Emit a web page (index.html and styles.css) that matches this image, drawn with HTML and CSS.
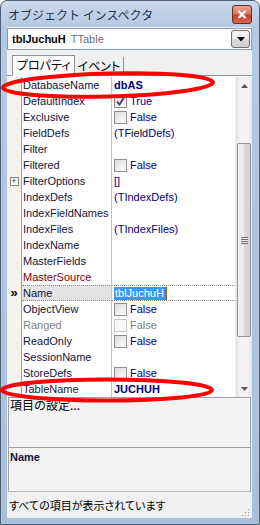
FILE: index.html
```html
<!DOCTYPE html>
<html lang="ja">
<head>
    <meta charset="UTF-8">
    <title>オブジェクト インスペクタ</title>
    <link rel="stylesheet" href="styles.css">
</head>
<body>
    <div class="window">
        <div class="titlebar">
            <span class="title">オブジェクト インスペクタ</span>
            <div class="close-btn">
                <svg width="10" height="9" viewBox="0 0 10 9"><path d="M1.5 1 L8.5 8 M8.5 1 L1.5 8" stroke="#fff" stroke-width="2.2"/></svg>
            </div>
        </div>

        <div class="client">
            <div class="combo">
                <span class="obj-name">tblJuchuH</span>
                <span class="obj-type">TTable</span>
                <div class="combo-btn">
                    <svg width="8" height="5" viewBox="0 0 8 5"><path d="M0 0 H8 L4 4.5 Z" fill="#000"/></svg>
                </div>
            </div>

            <div class="tabs">
                <div class="tab active">プロパティ</div>
                <div class="tab">イベント</div>
            </div>

            <div class="grid">
                <div class="rows">
                    <div class="row"><div class="gutter"></div><div class="prop">DatabaseName</div><div class="val bold">dbAS</div></div>
                    <div class="row"><div class="gutter"></div><div class="prop">DefaultIndex</div><div class="val"><span class="chk checked"><svg width="11" height="11" viewBox="0 0 11 11"><path d="M2 5.5 L4.5 8.5 L9 1.5" fill="none" stroke="#2d3f86" stroke-width="1.8"/></svg></span>True</div></div>
                    <div class="row"><div class="gutter"></div><div class="prop">Exclusive</div><div class="val"><span class="chk"></span>False</div></div>
                    <div class="row"><div class="gutter"></div><div class="prop">FieldDefs</div><div class="val">(TFieldDefs)</div></div>
                    <div class="row"><div class="gutter"></div><div class="prop">Filter</div><div class="val"></div></div>
                    <div class="row"><div class="gutter"></div><div class="prop">Filtered</div><div class="val"><span class="chk"></span>False</div></div>
                    <div class="row"><div class="gutter"><span class="plus">+</span></div><div class="prop">FilterOptions</div><div class="val">[]</div></div>
                    <div class="row"><div class="gutter"></div><div class="prop">IndexDefs</div><div class="val">(TIndexDefs)</div></div>
                    <div class="row"><div class="gutter"></div><div class="prop">IndexFieldNames</div><div class="val"></div></div>
                    <div class="row"><div class="gutter"></div><div class="prop">IndexFiles</div><div class="val">(TIndexFiles)</div></div>
                    <div class="row"><div class="gutter"></div><div class="prop">IndexName</div><div class="val"></div></div>
                    <div class="row"><div class="gutter"></div><div class="prop">MasterFields</div><div class="val"></div></div>
                    <div class="row"><div class="gutter"></div><div class="prop link">MasterSource</div><div class="val"></div></div>
                    <div class="row selected"><div class="gutter"><span class="marker">»</span></div><div class="prop">Name</div><div class="val"><span class="edit">tblJuchuH</span></div></div>
                    <div class="row"><div class="gutter"></div><div class="prop">ObjectView</div><div class="val"><span class="chk"></span>False</div></div>
                    <div class="row"><div class="gutter"></div><div class="prop readonly">Ranged</div><div class="val readonly"><span class="chk disabled"></span>False</div></div>
                    <div class="row"><div class="gutter"></div><div class="prop">ReadOnly</div><div class="val"><span class="chk"></span>False</div></div>
                    <div class="row"><div class="gutter"></div><div class="prop">SessionName</div><div class="val"></div></div>
                    <div class="row"><div class="gutter"></div><div class="prop">StoreDefs</div><div class="val"><span class="chk"></span>False</div></div>
                    <div class="row"><div class="gutter"></div><div class="prop">TableName</div><div class="val bold">JUCHUH</div></div>
                </div>

                <div class="vscroll">
                    <div class="sb-arrow sb-up">
                        <svg width="7" height="4" viewBox="0 0 7 4"><path d="M0 4 L3.5 0 L7 4 Z" fill="#555"/></svg>
                    </div>
                    <div class="sb-track sb-track-top"></div>
                    <div class="sb-thumb"><span class="grip"></span></div>
                    <div class="sb-track sb-track-bottom"></div>
                    <div class="sb-arrow sb-down">
                        <svg width="7" height="4" viewBox="0 0 7 4"><path d="M0 0 L7 0 L3.5 4 Z" fill="#555"/></svg>
                    </div>
                </div>
            </div>

            <div class="desc">
                <div class="desc-hint">項目の設定...</div>
                <div class="desc-name">Name</div>
            </div>

            <div class="status">
                <span>すべての項目が表示されています</span>
                <svg class="size-grip" width="10" height="10" viewBox="0 0 10 10">
                    <rect x="8" y="2" width="1" height="1" fill="#999"/>
                    <rect x="5" y="5" width="1" height="1" fill="#999"/>
                    <rect x="8" y="5" width="1" height="1" fill="#999"/>
                    <rect x="2" y="8" width="1" height="1" fill="#999"/>
                    <rect x="5" y="8" width="1" height="1" fill="#999"/>
                    <rect x="8" y="8" width="1" height="1" fill="#999"/>
                </svg>
            </div>
        </div>

        <!-- 赤丸の注釈 -->
        <svg class="marks" width="260" height="525" viewBox="0 0 260 525">
            <ellipse cx="108" cy="85" rx="105" ry="11.5" transform="rotate(-1.5 108 85)" fill="none" stroke="#ff0000" stroke-width="4"/>
            <ellipse cx="107" cy="390" rx="105" ry="10.5" fill="none" stroke="#ff0000" stroke-width="4"/>
        </svg>
    </div>
</body>
</html>
```

FILE: styles.css
```css
* {
    box-sizing: border-box;
}

body {
    margin: 0;
    font-family: "Liberation Sans", Tahoma, sans-serif;
    font-size: 11px;
    background: #fff;
}

.window {
    position: relative;
    width: 260px;
    height: 525px;
    border: 1px solid #4e6079;
    border-radius: 7px 7px 0 0;
    background: linear-gradient(to bottom, #cad9ec 0, #b4c9e2 26px, #a9c0dc 100%);
    padding: 0 7px 6px 6px;
    display: flex;
    flex-direction: column;
}

.titlebar {
    height: 26px;
    display: flex;
    align-items: center;
    justify-content: space-between;
    padding-left: 1px;
}

.title {
    font-family: "Noto Sans CJK JP", sans-serif;
    font-size: 12px;
    color: #1d3050;
}

.close-btn {
    width: 20px;
    height: 19px;
    border: 1px solid #6e2a20;
    border-radius: 3px;
    background: linear-gradient(to bottom, #e9a795 0, #d9745d 45%, #c5442b 55%, #d7674b 100%);
    display: flex;
    align-items: center;
    justify-content: center;
}

.client {
    flex: 1;
    display: flex;
    flex-direction: column;
    background: #f0f0f0;
}

/* コンボボックス */
.combo {
    margin-top: 1px;
    height: 22px;
    border: 1px solid #8a9ab0;
    background: #fff;
    display: flex;
    align-items: center;
    padding-left: 4px;
}

.obj-name {
    font-weight: bold;
    color: #000;
}

.obj-type {
    color: #707070;
    margin-left: 5px;
}

.combo-btn {
    margin-left: auto;
    margin-right: 1px;
    width: 19px;
    height: 18px;
    border: 1px solid #707070;
    border-radius: 3px;
    background: linear-gradient(to bottom, #f3f3f3 0, #ebebeb 50%, #dcdcdc 50%, #cfcfcf 100%);
    display: flex;
    align-items: center;
    justify-content: center;
}

/* タブ */
.tabs {
    height: 26px;
    display: flex;
    align-items: flex-end;
    padding-left: 5px;
    border-bottom: 1px solid #8c8f96;
}

.tab {
    font-family: "Noto Sans CJK JP", sans-serif;
    font-feature-settings: "palt";
    font-size: 12px;
    height: 19px;
    line-height: 18px;
    padding: 0 3px;
    color: #000;
    white-space: nowrap;
    border-right: 1px solid #8c8f96;
    margin-bottom: -1px;
    border-bottom: 1px solid #8c8f96;
}

.tab.active {
    height: 21px;
    padding: 0 3px 0 4px;
    background: #fcfcfc;
    border: 1px solid #8c8f96;
    border-bottom-color: #fcfcfc;
}

/* プロパティ一覧 */
.grid {
    height: 321px;
    display: flex;
    padding-top: 1px;
    background: #fff;
}

.rows {
    flex: 1;
    display: flex;
    flex-direction: column;
}

.row {
    height: 16px;
    display: flex;
}

.gutter {
    width: 15px;
    border-right: 1px solid #a0a0a0;
    background: #f6f4ea;
    display: flex;
    align-items: center;
    justify-content: center;
}

.prop {
    width: 90px;
    padding-left: 1px;
    line-height: 16px;
    color: #14143c;
    border-right: 1px solid #c4c4c4;
    white-space: nowrap;
    overflow: hidden;
}

.prop.link {
    color: #800000;
}

.prop.readonly,
.val.readonly {
    color: #808080;
}

.val {
    flex: 1;
    padding-left: 2px;
    color: #000080;
    display: flex;
    align-items: center;
    white-space: nowrap;
}

.val.bold {
    font-weight: bold;
}

.chk {
    width: 13px;
    height: 13px;
    margin-right: 3px;
    border: 1px solid #8f8f8f;
    background: linear-gradient(135deg, #dcdcdc 0, #f4f4f4 70%, #fff 100%);
    display: inline-flex;
    align-items: center;
    justify-content: center;
}

.chk.disabled {
    border-color: #c8c8c8;
    background: #f7f7f7;
}

.plus {
    width: 9px;
    height: 9px;
    border: 1px solid #8a8a8a;
    background: #fff;
    font-size: 9px;
    line-height: 7px;
    text-align: center;
    color: #333;
}

.marker {
    font-size: 13px;
    font-weight: bold;
    color: #000;
    line-height: 14px;
}

.row.selected .prop,
.row.selected .val {
    border-top: 1px dotted #8c8c8c;
    border-bottom: 1px dotted #8c8c8c;
    line-height: 14px;
}

.row.selected .prop {
    background: #e4e4e4;
}

.edit {
    background: #3399ff;
    color: #fff;
    height: 13px;
    line-height: 13px;
    padding: 0 1px;
    border-right: 2px solid #b0601a;
}

/* スクロールバー */
.vscroll {
    width: 17px;
    display: flex;
    flex-direction: column;
    background: linear-gradient(to right, #e2e2e2 0, #f2f2f2 25%, #f4f4f4 75%, #e4e4e4 100%);
    border-left: 1px solid #ececec;
}

.sb-arrow {
    display: flex;
    align-items: center;
    justify-content: center;
}

.sb-up {
    height: 17px;
}

.sb-down {
    height: 16px;
}

.sb-track-top {
    height: 49px;
}

.sb-track-bottom {
    height: 44px;
}

.sb-thumb {
    height: 194px;
    margin: 0 1px;
    border: 1px solid #979797;
    border-radius: 2px;
    background: linear-gradient(to right, #f4f4f4 0, #e9e9e9 50%, #dadada 50%, #d0d0d0 100%);
    display: flex;
    align-items: center;
    justify-content: center;
}

.grip {
    width: 7px;
    height: 7px;
    background: repeating-linear-gradient(to bottom, #6a6a6a 0, #6a6a6a 1px, #f0f0f0 1px, #f0f0f0 2px);
}

/* 説明欄 */
.desc {
    height: 95px;
    margin: 0 1px;
    border: 1px solid #a0a0a0;
    border-bottom-color: #b4b4b4;
    display: flex;
    flex-direction: column;
    background: #f3f3f3;
}

.desc-hint {
    height: 50px;
    padding-left: 1px;
    font-family: "Noto Sans CJK JP", sans-serif;
    font-size: 12px;
    line-height: 14px;
    border-bottom: 1px solid #a0a0a0;
}

.desc-name {
    flex: 1;
    padding: 3px 1px;
    font-weight: bold;
    color: #101038;
}

.status {
    height: 26px;
    padding: 0 2px;
    font-family: "Noto Sans CJK JP", sans-serif;
    font-feature-settings: "palt";
    font-size: 11px;
    display: flex;
    align-items: center;
    justify-content: space-between;
}

.size-grip {
    align-self: flex-end;
    margin-bottom: 1px;
}

.marks {
    position: absolute;
    top: -1px;
    left: -1px;
    pointer-events: none;
}
```
